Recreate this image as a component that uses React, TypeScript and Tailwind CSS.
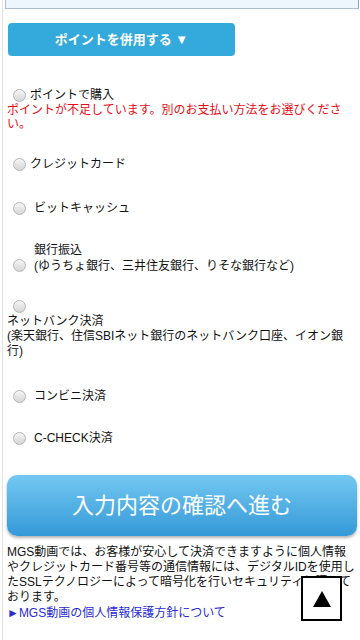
import React from "react";

function Radio() {
  return (
    <span className="inline-block w-[13px] h-[13px] shrink-0 rounded-full border border-[#b4b4b4] bg-gradient-to-b from-[#f6f6f6] to-[#d6d6d6]" />
  );
}

export default function App() {
  return (
    <div
      className="relative min-h-[640px] bg-white ml-[2px] border-l border-[#e3e3e3] text-[12px] text-[#111]"
      style={{ fontFamily: '"Liberation Sans", "Noto Sans CJK JP", sans-serif' }}
    >
      <div className="ml-[2px] mr-[1px] h-[9px] border border-t-0 border-[#a9bed4] border-r-[#8ba1b8] bg-[#eef6fd]" />
      <div className="pl-[4px] pr-[3px]">
        <button className="mt-[14px] ml-[1px] w-[227px] h-[33px] rounded-[4px] bg-[#33aadb] text-white font-bold text-[13px] flex items-center justify-center">
          ポイントを併用する ▼
        </button>

        <div className="mt-[32px] h-[15px] flex items-center leading-[15px]">
          <span className="ml-[6px] mr-[4px] flex"><Radio /></span>
          <span>ポイントで購入</span>
        </div>
        <div className="text-[#e60c16] leading-[14px]">
          ポイントが不足しています。別のお支払い方法をお選びください。
        </div>

        <div className="mt-[25px] h-[16px] flex items-center leading-[16px]">
          <span className="ml-[6px] mr-[4px] flex"><Radio /></span>
          <span>クレジットカード</span>
        </div>

        <div className="mt-[28px] h-[16px] flex items-center leading-[16px]">
          <span className="ml-[6px] mr-[8px] flex"><Radio /></span>
          <span>ビットキャッシュ</span>
        </div>

        <div className="mt-[26px] flex items-end leading-[16px]">
          <span className="ml-[6px] mr-[8px] mb-[2px] flex"><Radio /></span>
          <div>
            <div>銀行振込</div>
            <div>(ゆうちょ銀行、三井住友銀行、りそな銀行など)</div>
          </div>
        </div>

        <div className="mt-[24px] h-[16px] flex items-center">
          <span className="ml-[6px] flex"><Radio /></span>
        </div>
        <div className="leading-[15px]">
          <div>ネットバンク決済</div>
          <div>(楽天銀行、住信SBIネット銀行のネットバンク口座、イオン銀行)</div>
        </div>

        <div className="mt-[29px] h-[16px] flex items-center leading-[16px]">
          <span className="ml-[6px] mr-[8px] flex"><Radio /></span>
          <span>コンビニ決済</span>
        </div>

        <div className="mt-[26px] h-[16px] flex items-center leading-[16px]">
          <span className="ml-[6px] mr-[8px] flex"><Radio /></span>
          <span>C-CHECK決済</span>
        </div>

        <button className="mt-[29px] w-[350px] h-[61px] rounded-[10px] bg-gradient-to-b from-[#72c8f1] to-[#3399d7] shadow-[0_2px_3px_rgba(0,0,0,0.3)] text-white text-[22px] flex items-center justify-center">
          入力内容の確認へ進む
        </button>

        <p className="mt-[9px] leading-[15px]">
          MGS動画では、お客様が安心して決済できますように個人情報やクレジットカード番号等の通信情報には、デジタルIDを使用したSSLテクノロジーによって暗号化を行いセキュリティ保護しております。
        </p>
        <div className="leading-[16px] text-[#2a2ad8]">►MGS動画の個人情報保護方針について</div>
      </div>

      <div className="fixed right-[18px] bottom-[19px] w-[41px] h-[45px] bg-white border-2 border-black flex items-center justify-center">
        <svg width="18" height="16" viewBox="0 0 18 16">
          <polygon points="9,0 18,16 0,16" fill="#000" />
        </svg>
      </div>
    </div>
  );
}
